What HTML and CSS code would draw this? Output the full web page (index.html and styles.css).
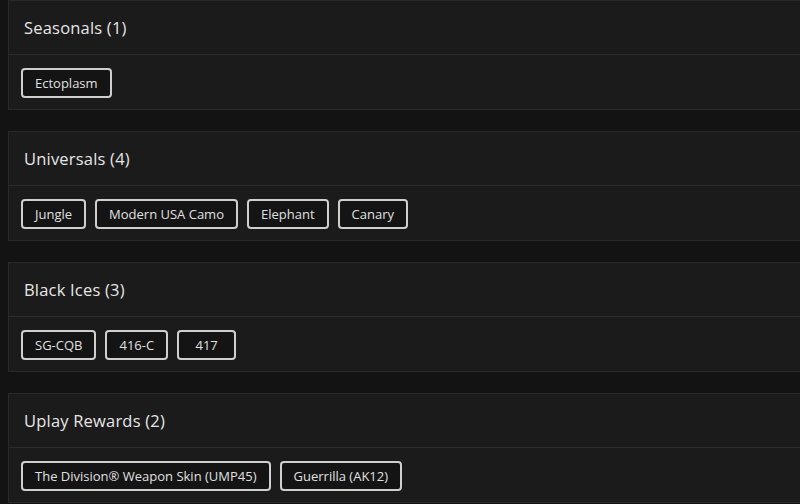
FILE: index.html
```html
<!DOCTYPE html>
<html>
<head>
<meta charset="utf-8">
<link rel="stylesheet" href="styles.css">
</head>
<body>
<div class="list">
  <section class="card">
    <div class="card-head"><h2 class="card-title">Seasonals (1)</h2></div>
    <div class="card-body">
      <span class="chip">Ectoplasm</span>
    </div>
  </section>
  <section class="card">
    <div class="card-head"><h2 class="card-title">Universals (4)</h2></div>
    <div class="card-body">
      <span class="chip">Jungle</span>
      <span class="chip">Modern USA Camo</span>
      <span class="chip">Elephant</span>
      <span class="chip">Canary</span>
    </div>
  </section>
  <section class="card">
    <div class="card-head"><h2 class="card-title">Black Ices (3)</h2></div>
    <div class="card-body">
      <span class="chip">SG-CQB</span>
      <span class="chip">416-C</span>
      <span class="chip">417</span>
    </div>
  </section>
  <section class="card">
    <div class="card-head"><h2 class="card-title">Uplay Rewards (2)</h2></div>
    <div class="card-body">
      <span class="chip">The Division® Weapon Skin (UMP45)</span>
      <span class="chip">Guerrilla (AK12)</span>
    </div>
  </section>
</div>
</body>
</html>
```

FILE: styles.css
```css
html, body {
  margin: 0;
  padding: 0;
  background: #131313;
  overflow: hidden;
  width: 800px;
  height: 504px;
}
body {
  font-family: "Open Sans", "Liberation Sans", sans-serif;
  color: #e2e2e2;
}
.list {
  display: flex;
  flex-direction: column;
  gap: 21px;
  margin-left: 8px;
  width: 820px;
}
.card {
  background: #1b1b1b;
  border: 1px solid #292929;
  height: 108px;
  box-sizing: content-box;
  display: flex;
  flex-direction: column;
}
.card-head {
  height: 54px;
  flex: none;
  border-bottom: 1px solid #2c2c2c;
  display: flex;
  align-items: center;
  padding-left: 15px;
  box-sizing: border-box;
}
.card-title {
  margin: 0;
  font-size: 16.5px;
  font-weight: 500;
  color: #e6e6e6;
  letter-spacing: 0.2px;
  padding-bottom: 1px;
}
.card-body {
  display: flex;
  gap: 9px;
  padding: 13px 12px 0;
}
.chip {
  box-sizing: border-box;
  height: 30px;
  min-width: 59px;
  padding: 0 12px;
  border: 2px solid #cfcfcf;
  border-radius: 4px;
  background: #141414;
  font-size: 13px;
  color: #e0e0e0;
  display: flex;
  align-items: center;
  justify-content: center;
  white-space: nowrap;
}
```
